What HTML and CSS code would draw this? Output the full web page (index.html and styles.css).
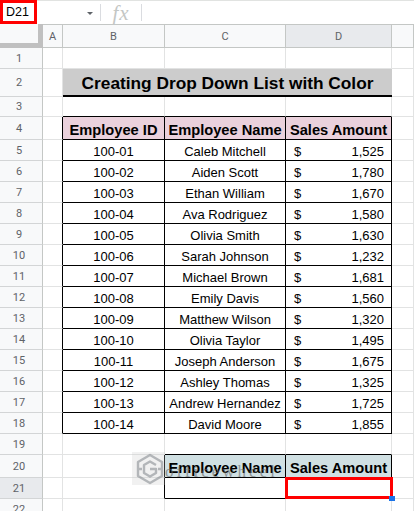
FILE: index.html
```html
<!DOCTYPE html>
<html>
<head>
<meta charset="utf-8">
<link rel="stylesheet" href="styles.css">
</head>
<body>
<div class="fbar">
  <div class="namebox">D21</div>
  <div class="fbar-rest">
    <div class="drop"><span class="arrow"></span></div>
    <div class="sep"></div>
    <div class="fx">fx</div>
    <div class="sep"></div>
  </div>
</div>
<div class="sheet">
  <div class="corner"></div><div class="ch">A</div><div class="ch">B</div><div class="ch">C</div><div class="ch sel">D</div><div class="ch"></div>

  <div class="rh">1</div><div class="c"></div><div class="c"></div><div class="c"></div><div class="c"></div><div class="c"></div>

  <div class="rh">2</div><div class="c"></div><div class="title">Creating Drop Down List with Color</div><div class="c"></div>

  <div class="rh">3</div><div class="c"></div><div class="c tt"></div><div class="c tt"></div><div class="c tt"></div><div class="c"></div>

  <div class="rh">4</div><div class="c tl"></div><div class="c t th">Employee ID</div><div class="c t th">Employee Name</div><div class="c t th">Sales Amount</div><div class="c"></div>

  <div class="rh">5</div><div class="c tl"></div><div class="c t ctr">100-01</div><div class="c t ctr">Caleb Mitchell</div><div class="c t amt"><span>$</span><span>1,525</span></div><div class="c"></div>
  <div class="rh">6</div><div class="c tl"></div><div class="c t ctr">100-02</div><div class="c t ctr">Aiden Scott</div><div class="c t amt"><span>$</span><span>1,780</span></div><div class="c"></div>
  <div class="rh">7</div><div class="c tl"></div><div class="c t ctr">100-03</div><div class="c t ctr">Ethan William</div><div class="c t amt"><span>$</span><span>1,670</span></div><div class="c"></div>
  <div class="rh">8</div><div class="c tl"></div><div class="c t ctr">100-04</div><div class="c t ctr">Ava Rodriguez</div><div class="c t amt"><span>$</span><span>1,580</span></div><div class="c"></div>
  <div class="rh">9</div><div class="c tl"></div><div class="c t ctr">100-05</div><div class="c t ctr">Olivia Smith</div><div class="c t amt"><span>$</span><span>1,630</span></div><div class="c"></div>
  <div class="rh">10</div><div class="c tl"></div><div class="c t ctr">100-06</div><div class="c t ctr">Sarah Johnson</div><div class="c t amt"><span>$</span><span>1,232</span></div><div class="c"></div>
  <div class="rh">11</div><div class="c tl"></div><div class="c t ctr">100-07</div><div class="c t ctr">Michael Brown</div><div class="c t amt"><span>$</span><span>1,681</span></div><div class="c"></div>
  <div class="rh">12</div><div class="c tl"></div><div class="c t ctr">100-08</div><div class="c t ctr">Emily Davis</div><div class="c t amt"><span>$</span><span>1,560</span></div><div class="c"></div>
  <div class="rh">13</div><div class="c tl"></div><div class="c t ctr">100-09</div><div class="c t ctr">Matthew Wilson</div><div class="c t amt"><span>$</span><span>1,320</span></div><div class="c"></div>
  <div class="rh">14</div><div class="c tl"></div><div class="c t ctr">100-10</div><div class="c t ctr">Olivia Taylor</div><div class="c t amt"><span>$</span><span>1,495</span></div><div class="c"></div>
  <div class="rh">15</div><div class="c tl"></div><div class="c t ctr">100-11</div><div class="c t ctr">Joseph Anderson</div><div class="c t amt"><span>$</span><span>1,675</span></div><div class="c"></div>
  <div class="rh">16</div><div class="c tl"></div><div class="c t ctr">100-12</div><div class="c t ctr">Ashley Thomas</div><div class="c t amt"><span>$</span><span>1,325</span></div><div class="c"></div>
  <div class="rh">17</div><div class="c tl"></div><div class="c t ctr">100-13</div><div class="c t ctr">Andrew Hernandez</div><div class="c t amt"><span>$</span><span>1,725</span></div><div class="c"></div>
  <div class="rh">18</div><div class="c tl"></div><div class="c t ctr">100-14</div><div class="c t ctr">David Moore</div><div class="c t amt"><span>$</span><span>1,855</span></div><div class="c"></div>

  <div class="rh">19</div><div class="c"></div><div class="c"></div><div class="c tt"></div><div class="c tt"></div><div class="c"></div>

  <div class="rh">20</div><div class="c"></div><div class="c tl"></div><div class="c t th2">Employee Name</div><div class="c t th2">Sales Amount</div><div class="c"></div>

  <div class="rh sel">21</div><div class="c"></div><div class="c tl"></div><div class="c t"></div><div class="c t cur"><span class="cursor"></span><span class="handle"></span></div><div class="c"></div>

  <div class="rh">22</div><div class="c"></div><div class="c"></div><div class="c"></div><div class="c"></div><div class="c"></div>
</div>

<div class="wm">
  <div class="wm-bg"></div>
  <svg class="wm-logo" width="30" height="32" viewBox="0 0 30 32">
    <g fill="none" stroke="#8a8f94" stroke-width="2.4" stroke-linejoin="round">
      <path d="M15 2 L27 9 V23 L15 30 L3 23 V9 Z"/>
      <path d="M21 12 L15 8.5 L9 12 V20 L15 23.5 L21 20 V16 H15"/>
      <path d="M3 16 H7 M23 16 H27"/>
    </g>
  </svg>
  <div class="wm-text">officewheel</div>
</div>
</body>
</html>
```

FILE: styles.css
```css
html, body {
  margin: 0;
  padding: 0;
}
body {
  width: 414px;
  height: 511px;
  overflow: hidden;
  background: #ffffff;
  font-family: "Liberation Sans", Arial, sans-serif;
  position: relative;
}

/* formula bar */
.fbar {
  display: flex;
  height: 24px;
}
.namebox {
  box-sizing: border-box;
  width: 37px;
  height: 24px;
  border: 3px solid #ff0000;
  padding-left: 3px;
  font-size: 12.5px;
  line-height: 18px;
  color: #000;
}
.fbar-rest {
  flex: 1;
  box-sizing: border-box;
  border-top: 1px solid #e1e3e1;
  display: flex;
  align-items: center;
}
.drop {
  width: 63px;
  display: flex;
  justify-content: flex-end;
  padding-right: 7px;
  box-sizing: border-box;
}
.arrow {
  width: 0;
  height: 0;
  border-left: 3px solid transparent;
  border-right: 3px solid transparent;
  border-top: 3px solid #5f6368;
  margin-top: 2px;
}
.sep {
  width: 1px;
  height: 17px;
  background: #dadce0;
}
.fx {
  width: 40px;
  text-align: center;
  font-family: "Liberation Serif", serif;
  font-style: italic;
  font-size: 21px;
  letter-spacing: 1px;
  line-height: 22px;
  color: #c4c7c5;
}

/* sheet grid */
.sheet {
  display: grid;
  grid-template-columns: 43px 20px 102px 121px 106px 22px;
  grid-template-rows: 24px 21px 28px 20px 23px repeat(14, 21px) 21px 23px 21px 21px;
}
.sheet > div {
  box-sizing: border-box;
}
.corner {
  background: #f8f9fa;
  border-right: 5px solid #c0c0c0;
  border-bottom: 5px solid #c0c0c0;
}
.ch {
  background: #f8f9fa;
  border-top: 1px solid #c4c7c5;
  border-right: 1px solid #c4c7c5;
  border-bottom: 1px solid #c4c7c5;
  display: flex;
  align-items: center;
  justify-content: center;
  font-family: Roboto, "Liberation Sans", sans-serif;
  font-size: 11px;
  color: #5f6368;
}
.ch.sel {
  background: #e8eaed;
}
.rh {
  background: #f8f9fa;
  border-right: 1px solid #c4c7c5;
  border-bottom: 1px solid #d3d5d6;
  display: flex;
  align-items: center;
  justify-content: center;
  padding-right: 4px;
  font-family: Roboto, "Liberation Sans", sans-serif;
  font-size: 11px;
  color: #5f6368;
}
.rh.sel {
  background: #e8eaed;
}
.c {
  border-right: 1px solid #e2e3e3;
  border-bottom: 1px solid #e2e3e3;
  font-size: 13px;
  color: #000;
  display: flex;
  align-items: flex-end;
  padding-bottom: 1px;
  white-space: nowrap;
}
.c.tt {
  border-bottom-color: #000;
}
.c.tl {
  border-right-color: #000;
}
.c.t {
  border-right-color: #000;
  border-bottom-color: #000;
}
.ctr {
  justify-content: center;
}
.th {
  background: #ead1dc;
  justify-content: center;
  font-weight: bold;
  font-size: 14.67px;
}
.th2 {
  background: #d0e0e3;
  justify-content: center;
  font-weight: bold;
  font-size: 14.67px;
}
.amt {
  justify-content: space-between;
  padding-left: 8px;
  padding-right: 7px;
}
.title {
  grid-column: span 3;
  background: #cccccc;
  border-bottom: 2px solid #000;
  display: flex;
  align-items: flex-end;
  justify-content: center;
  padding-bottom: 1px;
  font-weight: bold;
  font-size: 17.3px;
  color: #000;
}
.cur {
  position: relative;
}
.cursor {
  position: absolute;
  left: -1px;
  top: -1px;
  right: -2px;
  bottom: -1px;
  border: 3px solid #ff0000;
}
.handle {
  position: absolute;
  left: 103px;
  top: 18px;
  width: 6px;
  height: 5px;
  background: #1a73e8;
}

/* watermark */
.wm {
  position: absolute;
  left: 0;
  top: 0;
  pointer-events: none;
}
.wm-bg {
  position: absolute;
  left: 132px;
  top: 452px;
  width: 33px;
  height: 33px;
  background: rgba(200, 200, 200, 0.25);
}
.wm-logo {
  position: absolute;
  left: 135px;
  top: 453px;
  opacity: 0.6;
}
.wm-text {
  position: absolute;
  left: 165px;
  top: 463px;
  height: 15px;
  overflow: hidden;
  font-family: "Liberation Serif", serif;
  font-size: 17px;
  line-height: 18px;
  letter-spacing: 3px;
  color: rgba(100, 100, 100, 0.6);
  white-space: nowrap;
}
```
